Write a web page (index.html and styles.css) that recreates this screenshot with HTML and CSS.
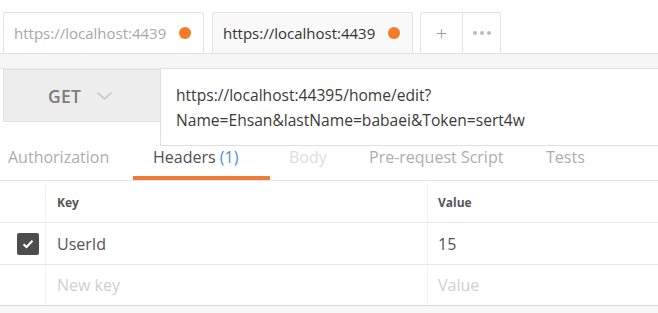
FILE: index.html
```html
<!DOCTYPE html>
<html>
<head>
<meta charset="utf-8">
<link rel="stylesheet" href="styles.css">
</head>
<body>
<div class="app">
  <div class="tabbar">
    <div class="tab tab-inactive"><span class="tab-title">https://localhost:4439</span><span class="dot"></span></div>
    <div class="tab tab-active"><span class="tab-title">https://localhost:4439</span><span class="dot"></span></div>
    <div class="tab-btns">
      <div class="tbtn plus">+</div>
      <div class="tbtn more"><span></span><span></span><span></span></div>
    </div>
  </div>
  <div class="strip"></div>
  <div class="request">
    <div class="method">
      <span class="method-name">GET</span>
      <svg class="chev" width="17" height="10" viewBox="0 0 17 10"><path d="M1.5 1.5 L8.5 8 L15.5 1.5" fill="none" stroke="#c4c4c4" stroke-width="1.6"/></svg>
    </div>
    <div class="url">https://localhost:44395/home/edit?<br>Name=Ehsan&amp;lastName=babaei&amp;Token=sert4w</div>
  </div>
  <div class="subtabs">
    <div class="stab s-auth">Authorization</div>
    <div class="stab s-headers active">Headers <span class="count">(1)</span></div>
    <div class="stab s-body">Body</div>
    <div class="stab s-pre">Pre-request Script</div>
    <div class="stab s-tests">Tests</div>
  </div>
  <div class="table">
    <div class="row head">
      <div class="c-check"></div>
      <div class="c-key">Key</div>
      <div class="c-val">Value</div>
    </div>
    <div class="row">
      <div class="c-check"><span class="checkbox"><svg width="12" height="10" viewBox="0 0 12 10"><path d="M1.5 5.2 L4.5 8 L10.5 1.8" fill="none" stroke="#fff" stroke-width="2"/></svg></span></div>
      <div class="c-key txt">UserId</div>
      <div class="c-val txt">15</div>
    </div>
    <div class="row last">
      <div class="c-check"></div>
      <div class="c-key ph">New key</div>
      <div class="c-val ph">Value</div>
    </div>
  </div>
  <div class="bottom"></div>
</div>
</body>
</html>
```
FILE: styles.css
```css
* { box-sizing: border-box; }
html, body { margin: 0; padding: 0; background: #fff; }
body { font-family: "Open Sans", "Noto Sans", sans-serif; width: 658px; height: 313px; overflow: hidden; }
.app { width: 658px; }
.tabbar { display: flex; align-items: flex-end; height: 54px; padding-left: 3px; border-bottom: 1px solid #e3e3e3; }
.tab { width: 201px; height: 41px; border: 1px solid #e3e3e3; border-bottom: none; border-radius: 3px 3px 0 0; display: flex; align-items: center; padding-left: 10px; margin-right: 8px; font-size: 15px; }
.tab-inactive { background: #fff; color: #a8a8a8; }
.tab-active { background: #f9f9f9; color: #333; }
.tab-title { flex: 1; white-space: nowrap; }
.dot { width: 12px; height: 12px; border-radius: 50%; background: #f47c25; margin-right: 12px; flex: none; }
.tab-btns { display: flex; height: 41px; margin-left: -1px; }
.tbtn { height: 41px; border: 1px solid #e3e3e3; border-bottom: none; display: flex; align-items: center; justify-content: center; background: #fff; }
.plus { width: 43px; border-radius: 3px 0 0 0; font-size: 20px; color: #999; font-weight: 300; }
.more { width: 38px; border-left: none; border-radius: 0 3px 0 0; gap: 3px; }
.more span { width: 4px; height: 4px; border-radius: 50%; background: #bbb; }
.strip { height: 15px; background: #f6f6f6; border-bottom: 1px solid #e8e8e8; }
.request { display: flex; align-items: flex-start; padding-left: 3px; }
.method { width: 157px; height: 53px; background: #ededed; border: 1px solid #e4e4e4; border-right: none; display: flex; align-items: center; padding-left: 44px; gap: 15px; }
.method-name { font-size: 17.5px; font-weight: 600; color: #7d7d7d; letter-spacing: 0.3px; }
.chev { margin-top: 1px; }
.url { flex: 1; height: 78px; border: 1px solid #e0e0e0; border-right: none; background: #fff; padding: 14px 0 0 15px; font-size: 15.6px; line-height: 25px; color: #3a3a3a; margin-top: -1px; white-space: nowrap; }
.subtabs { height: 35px; border-bottom: 1px solid #e3e3e3; display: flex; font-size: 16px; color: #adadad; white-space: nowrap; }
.stab { height: 34px; line-height: 23px; }
.s-auth { margin-left: 8px; width: 125px; }
.s-headers { width: 137px; padding-left: 20px; color: #505050; border-bottom: 4px solid #ef7b34; }
.count { color: #4a90e2; }
.s-body { margin-left: 19px; width: 80px; color: #dedede; }
.s-pre { width: 177px; }
.table { border-bottom: 1px solid #d9d9d9; }
.row { display: flex; height: 42px; border-bottom: 1px solid #e6e6e6; }
.row.head { height: 42px; font-size: 12px; font-weight: 700; color: #555; padding-top: 2px; }
.row.last { border-bottom: none; height: 40px; }
.c-check { width: 46px; border-right: 1px solid #f2f2f2; display: flex; align-items: center; justify-content: flex-start; padding-left: 17px; }
.c-key { width: 382px; border-right: 1px solid #f2f2f2; display: flex; align-items: center; padding-left: 11px; }
.c-val { flex: 1; display: flex; align-items: center; padding-left: 10px; }
.txt { font-size: 16px; color: #555; }
.ph { font-size: 16px; color: #cfcfcf; }
.checkbox { width: 22px; height: 22px; background: #4d4d4d; border-radius: 2px; display: flex; align-items: center; justify-content: center; }
.bottom { height: 8px; background: #f8f8f8; }
```
